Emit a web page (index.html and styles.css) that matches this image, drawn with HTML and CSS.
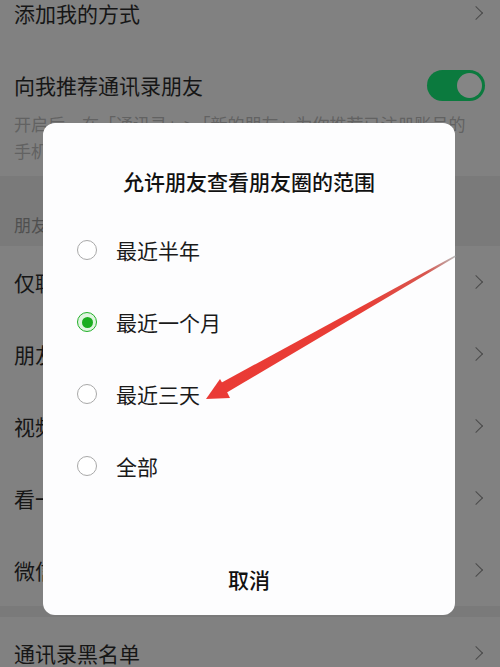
FILE: index.html
```html
<!DOCTYPE html>
<html lang="zh-CN">
<head>
<meta charset="utf-8">
<title>隐私</title>
<link rel="stylesheet" href="styles.css">
</head>
<body>
<div class="page">
  <div class="group first">
    <div class="row"><span class="label">添加我的方式</span><span class="chev"></span></div>
    <div class="row switch-row"><span class="label">向我推荐通讯录朋友</span><span class="toggle"><span class="knob"></span></span></div>
    <p class="desc">开启后，在「通讯录」>「新的朋友」为你推荐已注册账号的手机联系人。</p>
  </div>
  <div class="section-title">朋友圈和视频动态</div>
  <div class="group">
    <div class="row"><span class="label">仅聊天的朋友</span><span class="chev"></span></div>
    <div class="row"><span class="label">朋友圈</span><span class="chev"></span></div>
    <div class="row"><span class="label">视频动态</span><span class="chev"></span></div>
    <div class="row"><span class="label">看一看</span><span class="chev"></span></div>
    <div class="row"><span class="label">微信运动</span><span class="chev"></span></div>
  </div>
  <div class="gap"></div>
  <div class="group">
    <div class="row"><span class="label">通讯录黑名单</span><span class="chev"></span></div>
  </div>
</div>

<div class="dialog">
  <div class="dialog-title">允许朋友查看朋友圈的范围</div>
  <ul class="options">
    <li class="option"><span class="radio"></span><span class="opt-label">最近半年</span></li>
    <li class="option"><span class="radio checked"></span><span class="opt-label">最近一个月</span></li>
    <li class="option"><span class="radio"></span><span class="opt-label">最近三天</span></li>
    <li class="option"><span class="radio"></span><span class="opt-label">全部</span></li>
  </ul>
  <div class="cancel">取消</div>
</div>

<svg class="arrow" width="500" height="667" viewBox="0 0 500 667" xmlns="http://www.w3.org/2000/svg">
  <defs>
    <linearGradient id="shaft" x1="455" y1="256" x2="220" y2="390" gradientUnits="userSpaceOnUse">
      <stop offset="0" stop-color="#b9b9b9"/>
      <stop offset="0.12" stop-color="#d8574f"/>
      <stop offset="0.4" stop-color="#e83d36"/>
      <stop offset="1" stop-color="#ea3b35"/>
    </linearGradient>
  </defs>
  <polygon points="455,255.5 455.5,257 226,393 219,384" fill="url(#shaft)"/>
  <polygon points="206,399 220,379 225,388 230,398" fill="#ea3a36"/>
</svg>
</body>
</html>
```

FILE: styles.css
```css
* { box-sizing: border-box; }

html, body {
  margin: 0;
  padding: 0;
}

body {
  width: 500px;
  height: 667px;
  overflow: hidden;
  position: relative;
  background: #7a7a7a;
  font-family: "Noto Sans CJK SC", "Noto Sans", sans-serif;
  color: #161616;
}

.page {
  display: flex;
  flex-direction: column;
}

.group {
  background: #818181;
  display: flex;
  flex-direction: column;
}

.group.first {
  margin-top: -23px;
  padding-bottom: 12px;
}

.row {
  height: 72px;
  display: flex;
  align-items: center;
  justify-content: space-between;
  padding: 0 17px 0 14px;
}

.label {
  font-size: 21px;
  line-height: 28px;
  color: #161616;
}

.chev {
  width: 10px;
  height: 10px;
  border-top: 1.6px solid #4a4a4a;
  border-right: 1.6px solid #4a4a4a;
  transform: rotate(45deg);
  margin-right: 2px;
}

.switch-row {
  height: 60px;
  margin-top: 6px;
}

.toggle {
  width: 58px;
  height: 31px;
  border-radius: 16px;
  background: #0b7a3e;
  display: flex;
  align-items: center;
  justify-content: flex-end;
  padding: 3px;
  margin-right: -2px;
}

.knob {
  width: 25px;
  height: 25px;
  border-radius: 50%;
  background: #858585;
}

.desc {
  margin: -5px 0 0;
  padding: 0 24px 0 14px;
  font-size: 17px;
  line-height: 27px;
  color: #626262;
}

.section-title {
  height: 70px;
  padding: 37px 14px 0;
  font-size: 17px;
  line-height: 24px;
  color: #4f4f4f;
}

.gap {
  height: 11px;
}

/* dialog */
.dialog {
  position: absolute;
  left: 43px;
  top: 123px;
  width: 412px;
  height: 492px;
  background: #fdfdfe;
  border-radius: 12px;
  display: flex;
  flex-direction: column;
  padding-top: 43px;
}

.dialog-title {
  text-align: center;
  font-size: 21px;
  line-height: 30px;
  font-weight: 500;
  color: #111;
}

.options {
  list-style: none;
  margin: 18px 0 0;
  padding: 0;
}

.option {
  height: 72px;
  display: flex;
  align-items: center;
  padding-left: 34px;
  gap: 19px;
}

.radio {
  width: 20px;
  height: 20px;
  border-radius: 50%;
  border: 1px solid #a9a9a9;
  background: #fff;
  display: flex;
  align-items: center;
  justify-content: center;
  flex: none;
}

.radio.checked {
  border: 1.5px solid #23b02a;
  background: #dff5df;
}

.radio.checked::after {
  content: "";
  width: 11px;
  height: 11px;
  border-radius: 50%;
  background: #1aad1f;
}

.opt-label {
  font-size: 21px;
  line-height: 28px;
  color: #1a1a1a;
}

.cancel {
  margin-top: 47px;
  height: 60px;
  display: flex;
  align-items: center;
  justify-content: center;
  font-size: 21px;
  font-weight: 500;
  color: #111;
}

.arrow {
  position: absolute;
  left: 0;
  top: 0;
  pointer-events: none;
}
```
